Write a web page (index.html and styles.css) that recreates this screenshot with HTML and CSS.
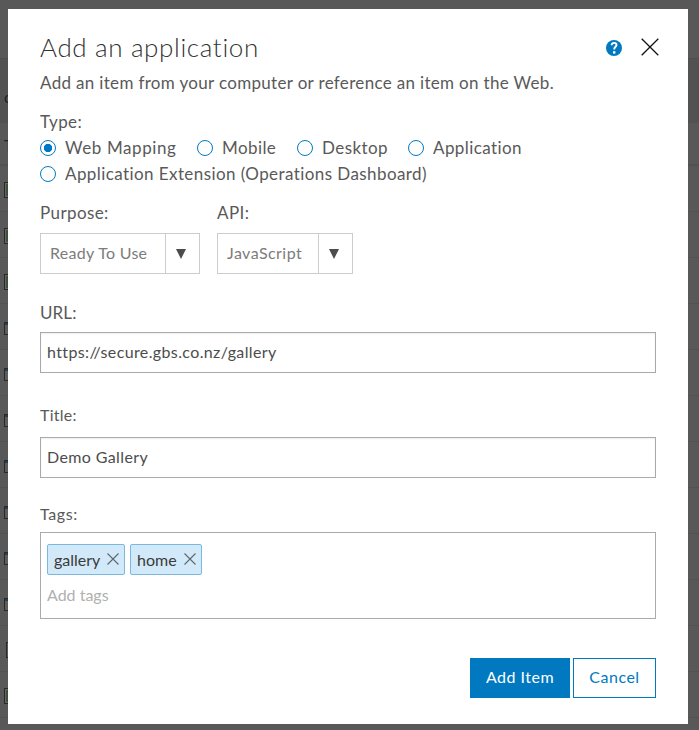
FILE: index.html
```html
<!DOCTYPE html>
<html lang="en">
<head>
<meta charset="utf-8">
<title>Add an application</title>
<link rel="stylesheet" href="styles.css">
</head>
<body>
<div class="backdrop" aria-hidden="true">
  <div class="bar"></div>
  <div class="band"><span>o</span></div>
  <div class="heading"><span>T</span></div>
  <div class="row"><i class="thumb"></i></div>
  <div class="row"><i class="thumb"></i></div>
  <div class="row"><i class="thumb"></i></div>
  <div class="row"><i class="window"></i></div>
  <div class="row"><i class="window"></i></div>
  <div class="row"><i class="window"></i></div>
  <div class="row"><i class="window"></i></div>
  <div class="row"><i class="window"></i></div>
  <div class="row"><i class="window"></i></div>
  <div class="row"><i class="window"></i></div>
  <div class="row"><i class="page"></i></div>
  <div class="row"><i class="thumb"></i></div>
</div>
<main class="dialog" role="dialog" aria-labelledby="dialog-title">
  <header class="header">
    <h1 id="dialog-title">Add an application</h1>
    <div class="actions">
      <svg class="help" width="16" height="16" viewBox="0 0 16 16"><circle cx="8" cy="8" r="8" fill="#0079c1"/><path d="M5.7 5.2C5.7 3.7 6.7 2.9 8.1 2.9S10.5 3.7 10.5 5C10.5 6.8 8.2 6.8 8.2 9.4" fill="none" stroke="#fff" stroke-width="1.9"/><rect x="7" y="11.2" width="2.4" height="2.4" fill="#fff"/></svg>
      <svg class="close" width="18" height="18" viewBox="0 0 18 18"><path d="M.7.7l16.6 16.6M17.3.7L.7 17.3" stroke="#111" stroke-width="1.3"/></svg>
    </div>
  </header>
  <p class="intro">Add an item from your computer or reference an item on the Web.</p>
  <div class="label type-label">Type:</div>
  <div class="radios">
    <label class="radio web"><i class="dot on"></i>Web Mapping</label>
    <label class="radio mobile"><i class="dot"></i>Mobile</label>
    <label class="radio desktop"><i class="dot"></i>Desktop</label>
    <label class="radio app"><i class="dot"></i>Application</label>
    <label class="radio ext"><i class="dot"></i>Application Extension (Operations Dashboard)</label>
  </div>
  <div class="selects">
    <div class="field purpose">
      <div class="label">Purpose:</div>
      <div class="select"><span class="value">Ready To Use</span><span class="arrow"><svg width="10" height="10"><path d="M0 0h10L5 10z"/></svg></span></div>
    </div>
    <div class="field api">
      <div class="label">API:</div>
      <div class="select"><span class="value">JavaScript</span><span class="arrow"><svg width="10" height="10"><path d="M0 0h10L5 10z"/></svg></span></div>
    </div>
  </div>
  <div class="label url-label">URL:</div>
  <div class="input url">https://secure.gbs.co.nz/gallery</div>
  <div class="label title-label">Title:</div>
  <div class="input title">Demo Gallery</div>
  <div class="label tags-label">Tags:</div>
  <div class="tagbox">
    <div class="tags">
      <span class="tag gallery">gallery<svg width="12" height="12"><path d="M.5.5l11 11M11.5.5l-11 11"/></svg></span>
      <span class="tag home">home<svg width="12" height="12"><path d="M.5.5l11 11M11.5.5l-11 11"/></svg></span>
    </div>
    <div class="placeholder">Add tags</div>
  </div>
  <footer class="footer">
    <button class="primary">Add Item</button>
    <button class="secondary">Cancel</button>
  </footer>
</main>
</body>
</html>
```
FILE: styles.css
```css
* { box-sizing: border-box; }
body { margin: 0; width: 699px; height: 730px; overflow: hidden; display: grid; background: #585858; font-family: Lato, "Liberation Sans", sans-serif; font-size: 16px; color: #595959; font-variant-ligatures: none; white-space: nowrap; }
.backdrop, .dialog { grid-area: 1 / 1; }
.backdrop { height: 730px; overflow: hidden; color: #222; }
.bar { height: 58px; }
.band { height: 65px; background: #525252; border-top: 1px solid #4e4e4e; padding: 28px 0 0 4px; line-height: 20px; }
.heading { height: 43px; border-bottom: 2px solid #515151; padding: 12px 0 0 4px; line-height: 20px; }
.row { height: 46px; border-bottom: 1px solid #515151; display: flex; align-items: center; padding: 2px 0 0 4px; }
.row i { display: block; width: 16px; height: 16px; border: 1px solid #292929; }
.row .thumb { background: #3d4f3d; box-shadow: inset 0 0 0 1px #656565; }
.row .window { height: 13px; margin-top: 1px; background: linear-gradient(#203f55 2px, #5c5c5c 2px); }
.row .page { margin-left: 2px; }
.dialog { width: 680px; height: 715px; margin: 9px 0 0 8px; padding: 0 32px; background: #fff; display: flex; flex-direction: column; }
.header { display: flex; justify-content: space-between; height: 60px; padding-top: 23px; }
h1 { margin: -1px 0 0; font-size: 26px; font-weight: 300; line-height: 32px; letter-spacing: .64px; color: #333; }
.actions { display: flex; gap: 19px; padding-top: 6px; margin-right: -3px; }
.help { margin-top: 2px; }
.intro { margin: 0; height: 42px; padding-top: 3px; font-size: 17px; line-height: 22px; letter-spacing: .33px; }
.label { font-size: 17px; line-height: 22px; letter-spacing: .4px; }
.radios { display: flex; flex-wrap: wrap; height: 52px; margin-top: 3px; font-size: 17px; letter-spacing: .42px; }
.radio { display: flex; height: 26px; line-height: 24px; }
.dot { width: 16px; height: 16px; border: 1px solid #0079c1; border-radius: 50%; margin: 4px 9px 0 0; }
.on { background: radial-gradient(circle, #0079c1 3.8px, #fff 4.5px); }
.web { width: 157px; letter-spacing: .6px; }
.mobile { width: 100px; }
.desktop { width: 111px; }
.selects { display: flex; gap: 17px; margin-top: 14px; }
.select { display: flex; height: 41px; margin-top: 9px; border: 1px solid #ccc; font-size: 16px; line-height: 37px; letter-spacing: .3px; color: #7c7c7c; }
.purpose { width: 160px; }
.api { width: 136px; }
.api .select { letter-spacing: .45px; }
.value { flex: 1; padding-left: 9px; }
.arrow { width: 34px; border-left: 1px solid #ccc; display: flex; align-items: center; justify-content: center; padding-right: 3px; }
.arrow svg { fill: #4c4c4c; }
.url-label { margin-top: 28px; letter-spacing: .1px; }
.input { height: 41px; margin-top: 8px; border: 1px solid #aaa; box-shadow: inset 0 1px 2px #eee; padding-left: 6px; font-size: 16px; line-height: 37px; letter-spacing: .38px; color: #4c4c4c; }
.title-label { margin-top: 31px; font-size: 16px; letter-spacing: .25px; }
.title { margin-top: 11px; }
.tags-label { margin-top: 25px; font-size: 16px; letter-spacing: .6px; }
.tagbox { height: 87px; margin-top: 7px; border: 1px solid #aaa; padding: 11px 6px; font-size: 16px; }
.tags { display: flex; gap: 5px; }
.tag { height: 31px; display: flex; justify-content: space-between; border: 1px solid #7ab9dd; border-radius: 2px; background: #d2e9f9; padding: 0 5px 0 6px; line-height: 29px; color: #3b3b3b; }
.tag svg { margin-top: 8px; stroke: #5b6870; stroke-width: 1.1; }
.gallery { width: 78px; }
.home { width: 72px; }
.placeholder { line-height: 22px; margin-top: 9px; color: #b0b0b0; }
.footer { display: flex; justify-content: flex-end; gap: 3px; margin-top: 39px; }
button { height: 40px; border: 1px solid #0079c1; padding: 0 0 2px; font: 16px/36px Lato, sans-serif; letter-spacing: .5px; text-align: center; }
.primary { width: 100px; background: #0079c1; color: #fff; }
.secondary { width: 83px; background: #fff; color: #0079c1; }
```
